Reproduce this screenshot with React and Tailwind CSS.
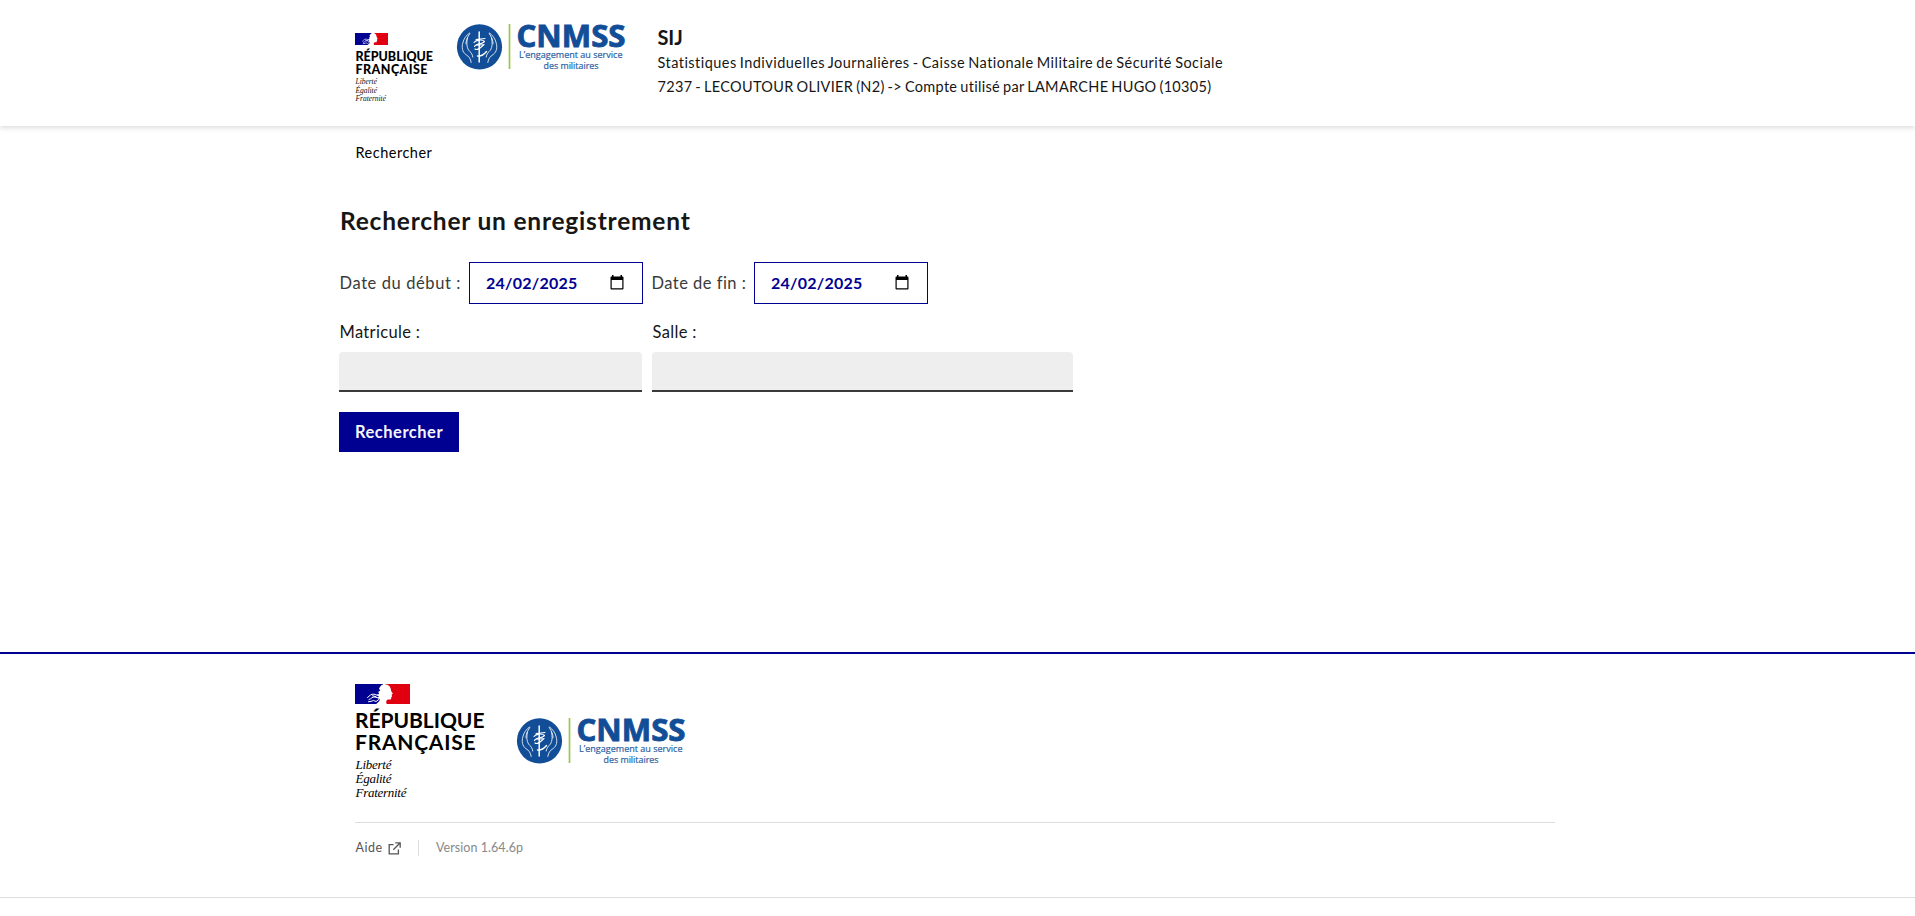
function Marianne() {
  return (
    <g>
      <path d="M0 0h28v20H0z" fill="#000091" />
      <path d="M30 0h25v20H30z" fill="#e1000f" />
      <path
        d="M26 1.500C28.500-.5 32.500-.3 34.500 2.200C35.800 3.800 35.800 5.600 36.300 7.200L37.900 9.700L36.700 10.600L37 12.400L36.300 13.200L36.100 15C35.300 16 33.500 15.300 32.300 15.700C31.100 16.500 30.900 18 31.700 20H21.200C22.600 18.600 24.500 17.400 25.100 15.500L22.500 13.500L24 12.300L21.800 10.500L24.200 10L23.200 8L25.200 6.500L24 4.500Z"
        fill="#fff"
      />
      <g fill="none" stroke="#fff" strokeWidth="1" strokeLinecap="round">
        <path d="M12.500 13.500C15 11.500 16 9.800 19 10.200L23.500 11.600" />
        <path d="M14 15.600C16.500 14.800 17 12.600 20 13L24 14.200" />
        <path d="M15.500 17.500L18.500 16.500L21 17.500L24.500 15" />
        <path d="M17.500 11.800L21 12.600M13.500 17.800L15 17.400" />
      </g>
    </g>
  );
}

function Republique({ small }) {
  if (small) {
    return (
      <svg viewBox="0 0 80 72" className="block h-[72px] w-[80px] shrink-0 overflow-visible">
        <svg x="0" y="0" width="33" height="12" viewBox="0 0 55 20">
          <Marianne />
        </svg>
        <g className="font-['Lato',sans-serif]" fontWeight="900" fontSize="12.500">
          <text x="0.500" y="27.500" textLength="77.500">RÉPUBLIQUE</text>
          <text x="0.500" y="40.500" textLength="72">FRANÇAISE</text>
        </g>
        <g className="font-['Liberation_Serif',serif]" fontStyle="italic" fontSize="7.500" fill="#111">
          <text x="0.500" y="51.200" textLength="21.500">Liberté</text>
          <text x="0.500" y="59.700" textLength="21.500">Égalité</text>
          <text x="0.500" y="68.200" textLength="30.500">Fraternité</text>
        </g>
      </svg>
    );
  }
  return (
    <svg viewBox="0 0 132 118" className="block h-[118px] w-[132px] shrink-0 overflow-visible">
      <svg x="0" y="0" width="55" height="20" viewBox="0 0 55 20">
        <Marianne />
      </svg>
      <g className="font-['Lato',sans-serif]" fontWeight="700" fontSize="21">
        <text x="0" y="44" textLength="129.500">RÉPUBLIQUE</text>
        <text x="0" y="66" textLength="120.500">FRANÇAISE</text>
      </g>
      <g className="font-['Liberation_Serif',serif]" fontStyle="italic" fontSize="13">
        <text x="0.500" y="85" textLength="36">Liberté</text>
        <text x="0.500" y="99" textLength="36">Égalité</text>
        <text x="0.500" y="113" textLength="51">Fraternité</text>
      </g>
    </svg>
  );
}

function Cnmss() {
  return (
    <svg viewBox="0 0 169 48" className="block h-[48px] w-[169px] shrink-0 overflow-visible">
      <circle cx="22.500" cy="22.900" r="22.600" fill="#114e97" />
      <g fill="none" stroke="#fff" strokeLinecap="round" strokeLinejoin="round">
        <g strokeWidth="0.9" opacity="0.9">
          <path d="M12.500 9C9.500 11 6.500 15 5.800 19C4.600 23 5.200 28 8.800 30.500C12 32.500 13.600 34.500 14.200 38.500" />
          <path d="M12.800 9.500C10.500 13 8.500 17 9 20M10.500 14C9.500 18 9.500 23 11.500 26C13.500 28 15.500 30 15.800 33" />
          <path d="M32.500 9C35.500 11 38.500 15 39.200 19C40.400 23 39.800 28 36.200 30.500C33 32.500 31.400 34.500 30.800 38.500" />
          <path d="M32.200 9.500C34.500 13 36.500 17 36 20M34.500 14C35.500 18 35.500 23 33.500 26C31.500 28 29.500 30 29.200 33" />
        </g>
        <path d="M22.200 8V38" strokeWidth="1.500" />
        <path d="M17 18.500C19 16 25 15 27.500 17.500C26 20.500 19 19 17.500 22.500M19 15.500L28 14.500M18 25C20 27 25.500 22 27 20.500" strokeWidth="1.100" />
        <path d="M20.500 32C23 32.500 26.500 31 29.500 27.500" strokeWidth="1.400" />
        <path d="M20 21L25 20.500" strokeWidth="2" opacity="0.7" />
      </g>
      <path d="M52.500 0V45" stroke="#9cc64b" strokeWidth="1.700" />
      <text x="59.500" y="23" textLength="109" lengthAdjust="spacingAndGlyphs" fontSize="30.500" fontWeight="700" fill="#114e97" stroke="#114e97" strokeWidth="0.9" className="font-['Open_Sans',sans-serif]">CNMSS</text>
      <g className="font-['Open_Sans',sans-serif]" fontSize="9" fill="#2a62a5" stroke="#2a62a5" strokeWidth="0.200">
        <text x="62" y="34" textLength="103.500" lengthAdjust="spacingAndGlyphs">L’engagement au service</text>
        <text x="86.500" y="45.200" textLength="55" lengthAdjust="spacingAndGlyphs">des militaires</text>
      </g>
    </svg>
  );
}

function DateBox({ value }) {
  return (
    <div className="flex h-[42px] w-[174px] items-center justify-between border border-[#000091] pr-[18px] pl-4 text-[16px] font-bold tracking-[0.24px] text-[#000091]">
      <span>{value}</span>
      <svg viewBox="0 0 14 15" className="-mt-px h-[15px] w-[14px]">
        <path d="M2 0h1.500v1.500h7V0H12v1.500h.5a1 1 0 0 1 1 1v11a1 1 0 0 1-1 1h-11a1 1 0 0 1-1-1v-11a1 1 0 0 1 1-1H2zM1.700 5v8.300h10.600V5z" fill="#000" fillRule="evenodd" />
      </svg>
    </div>
  );
}

export default function App() {
  return (
    <div className="flex h-[916px] w-full flex-col overflow-hidden bg-white font-['Lato',sans-serif] text-[#161616]">
      <header className="flex h-[126px] shrink-0 pl-[355px] shadow-[0_2px_5px_rgba(0,0,0,0.14)]">
        <div className="pt-[33px]">
          <Republique small />
        </div>
        <div className="pt-6 pl-[22px]">
          <Cnmss />
        </div>
        <div className="pt-6 pl-[31.500px] text-[14.500px] leading-6 whitespace-nowrap">
          <p className="text-[20px] leading-[27px] font-bold tracking-[-0.1px]">SIJ</p>
          <p className="tracking-[0.46px] [word-spacing:-1px]">Statistiques Individuelles Journalières - Caisse Nationale Militaire de Sécurité Sociale</p>
          <p className="tracking-[0.3px] [word-spacing:-1px]">7237 - LECOUTOUR OLIVIER (N2) -&gt; Compte utilisé par LAMARCHE HUGO (10305)</p>
        </div>
      </header>

      <nav className="flex h-[54px] shrink-0 items-center pl-[355.500px] text-[14.500px] tracking-[0.5px] text-black">Rechercher</nav>

      <main className="h-[472px] shrink-0 pt-[25px] pl-[339px]">
        <h1 className="h-8 pl-px text-[24.500px] leading-8 font-bold tracking-[0.79px]">Rechercher un enregistrement</h1>
        <div className="mt-[25px] flex items-center text-[16.500px] text-[#3a3a3a]">
          <span className="w-[130px] pl-[0.500px] tracking-[0.6px]">Date du début :</span>
          <DateBox value="24/02/2025" />
          <span className="ml-2 w-[103px] pl-[0.500px] tracking-[0.47px]">Date de fin :</span>
          <DateBox value="24/02/2025" />
        </div>
        <div className="mt-4 flex gap-[10px] text-[16.500px] leading-6 tracking-[0.33px]">
          <label className="flex flex-col gap-2">
            <span className="pl-[0.500px]">Matricule :</span>
            <input className="h-10 w-[303px] rounded-t border-b-2 border-[#3a3a3a] bg-[#eee]" />
          </label>
          <label className="flex flex-col gap-2">
            <span className="pl-[0.500px]">Salle :</span>
            <input className="h-10 w-[421px] rounded-t border-b-2 border-[#3a3a3a] bg-[#eee]" />
          </label>
        </div>
        <button className="mt-5 flex h-10 w-[120px] items-center justify-center pt-px bg-[#000091] text-[16.500px] font-bold tracking-[0.5px] text-[#f5f5fe]">Rechercher</button>
      </main>

      <footer className="h-[245px] shrink-0 border-t-2 border-[#000091] pl-[355px]">
        <div className="flex h-[168px] pt-[30px]">
          <Republique />
          <div className="pt-[34px] pl-[30px]">
            <Cnmss />
          </div>
        </div>
        <div className="flex h-[51px] w-[1200px] items-center border-t border-[#ddd] text-[12.500px] leading-5">
          <span className="pl-[0.500px] tracking-[0.5px] text-[#555]">Aide</span>
          <svg viewBox="0 0 13 13" className="ml-[5px] h-[13px] w-[13px]" fill="none" stroke="#555" strokeWidth="1.300">
            <path d="M5.500 2.600H1.200V11.800H10.400V7.500M7.300 .8H12.200V5.700M12 1L5.300 7.700" />
          </svg>
          <i className="ml-[17.500px] h-4 w-px bg-[#ddd]" />
          <span className="ml-[17px] tracking-[0.05px] text-[#888]">Version 1.64.6p</span>
        </div>
      </footer>
      <div className="h-[19px] shrink-0 border-t border-[#ddd]" />
    </div>
  );
}
